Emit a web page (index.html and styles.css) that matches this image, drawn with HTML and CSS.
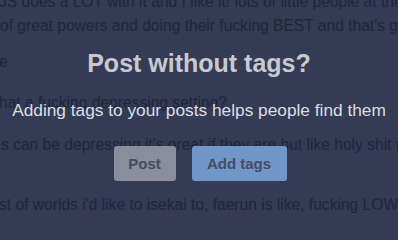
FILE: index.html
```html
<!DOCTYPE html>
<html>
<head>
<meta charset="utf-8">
<link rel="stylesheet" href="styles.css">
</head>
<body>
<div class="page">
  <div class="bg-text">
    <div class="line l1">JS does a LOT with it and I like it! lots of little people at the center</div>
    <div class="line l2">of great powers and doing their fucking BEST and that's great</div>
    <div class="line l3">e</div>
    <div class="line l4">hat a fucking depressing setting?</div>
    <div class="line l5">s can be depressing it's great if they are but like holy shit man</div>
    <div class="line l6">st of worlds <span class="sp">i'd</span> like to <span class="sp">isekai</span> to, <span class="sp">faerun</span> is like, fucking LOW c</div>
  </div>
  <div class="modal">
    <h1 class="title">Post without tags?</h1>
    <p class="subtitle">Adding tags to your posts helps people find them</p>
    <div class="actions">
      <button class="btn btn-post">Post</button>
      <button class="btn btn-tags">Add tags</button>
    </div>
  </div>
</div>
</body>
</html>
```

FILE: styles.css
```css
html, body {
  margin: 0;
  padding: 0;
}
body {
  background: #343b55;
  font-family: "Liberation Sans", Arial, sans-serif;
  width: 398px;
  height: 216px;
  overflow: hidden;
}
.page {
  position: relative;
  width: 398px;
  height: 216px;
  overflow: hidden;
}
.bg-text {
  color: #20263b;
  font-size: 15.6px;
  line-height: 24px;
}
.line {
  white-space: nowrap;
  height: 24px;
}
.l1 { margin-top: -10.5px; margin-left: -1px; }
.l2 { margin-left: 0; }
.l3 { margin-top: 12px; margin-left: -1px; }
.l4 { margin-top: 17px; margin-left: -1px; }
.l5 { margin-top: 18px; margin-left: 1px; }
.l6 { margin-top: 36px; margin-left: -1px; }
.sp {
  text-decoration: underline wavy #5b2d4c;
  text-decoration-thickness: 1px;
  text-underline-offset: 3px;
}
.modal {
  position: absolute;
  inset: 0;
  display: flex;
  flex-direction: column;
  align-items: center;
  padding-top: 48px;
}
.title {
  margin: 0;
  font-size: 25px;
  line-height: 30px;
  font-weight: bold;
  color: #c8c9ce;
}
.subtitle {
  margin: 22px 0 0;
  font-size: 17.3px;
  line-height: 20px;
  color: #dddee3;
  white-space: nowrap;
}
.actions {
  display: flex;
  gap: 16px;
  margin-top: 26px;
  margin-left: 2px;
}
.btn {
  font-family: "Liberation Sans", Arial, sans-serif;
  font-weight: bold;
  font-size: 15px;
  height: 35px;
  padding: 0;
  border: none;
  border-radius: 3px;
  color: #454b64;
}
.btn-post {
  background: #8a8d9b;
  width: 62px;
}
.btn-tags {
  background: #7196c8;
  width: 95px;
}
```
